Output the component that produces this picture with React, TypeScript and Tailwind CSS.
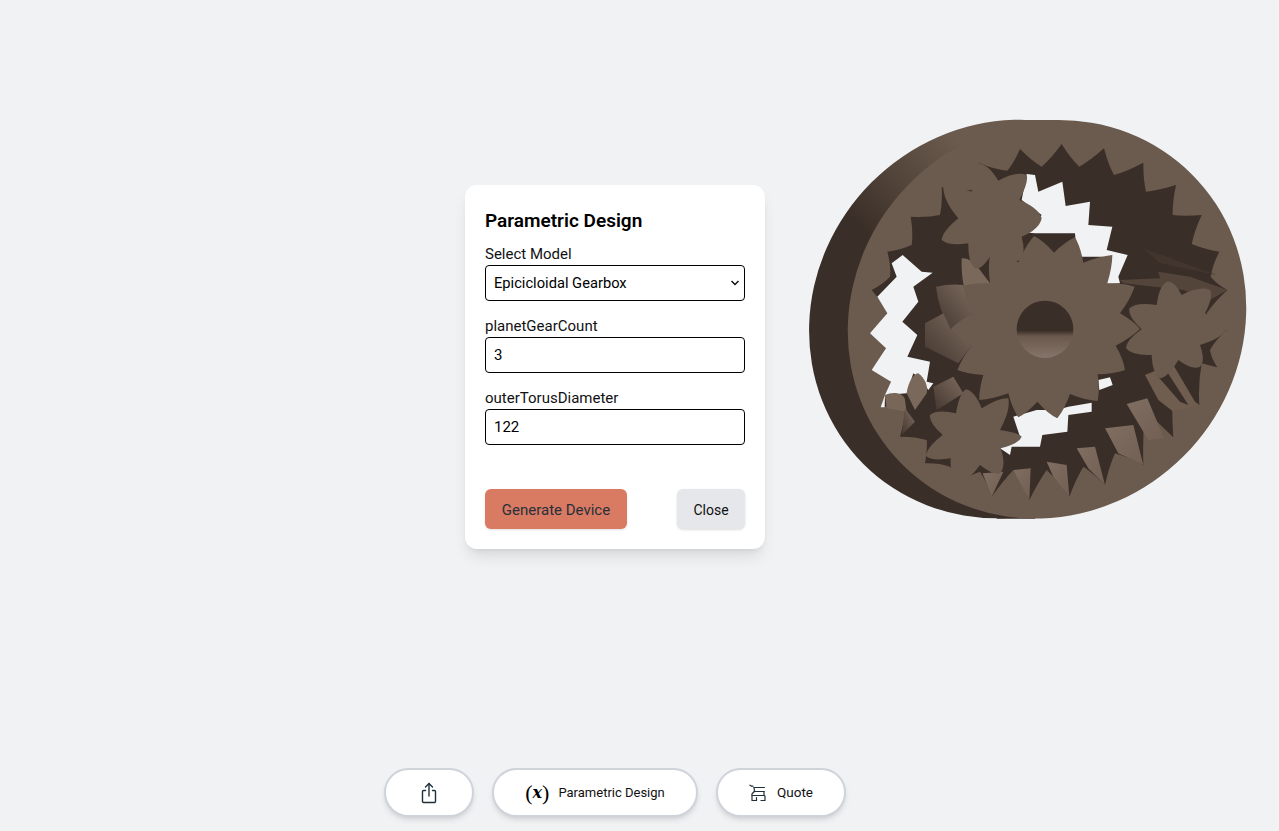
type Pt = [number, number];

// tips and valleys alternate; flanks bow outwards from the centre of the gear
function toothed(points: Pt[], cx: number, cy: number, bow: number) {
  let d = `M${points[0][0]} ${points[0][1]} `;
  points.forEach((p, i) => {
    const q = points[(i + 1) % points.length];
    const mx = (p[0] + q[0]) / 2;
    const my = (p[1] + q[1]) / 2;
    const len = Math.hypot(mx - cx, my - cy) || 1;
    d += `Q${(mx + ((mx - cx) / len) * bow).toFixed(1)} ${(my + ((my - cy) / len) * bow).toFixed(1)} ${q[0]} ${q[1]} `;
  });
  return d + "Z";
}

const sunPts: Pt[] = [
  [312, 18], [372, 68], [435, 22], [460, 98], [547, 75], [532, 160], [614, 170], [570, 250],
  [630, 297], [557, 347], [585, 420], [503, 433], [503, 513], [420, 492], [382, 565], [322, 515],
  [265, 562], [235, 490], [148, 510], [160, 435], [82, 420], [125, 347], [62, 297], [130, 250],
  [100, 168], [180, 160], [180, 75], [265, 97],
];
const planetA: Pt[] = [
  [148, 42], [205, 92], [290, 75], [268, 150], [335, 205], [275, 260], [270, 330], [180, 320],
  [135, 355], [115, 280], [35, 270], [85, 205], [40, 112], [125, 125],
];
const planetB: Pt[] = [
  [170, 65], [215, 105], [300, 90], [285, 160], [350, 208], [270, 255], [270, 320], [205, 300],
  [150, 355], [125, 285], [48, 265], [95, 208], [58, 145], [140, 135],
];
const planetC: Pt[] = [
  [258, 28], [305, 85], [385, 55], [360, 150], [425, 170], [362, 205], [360, 280], [300, 255],
  [228, 310], [212, 235], [138, 228], [188, 165], [150, 105], [228, 100],
];
const ringPts: Pt[] = [
  [652, 212], [690, 147], [755, 200], [815, 132], [868, 200], [942, 145], [972, 225], [1060, 188],
  [1068, 275], [1158, 255], [1148, 345], [1235, 345], [1205, 432], [1288, 455], [1262, 530], [1312, 570],
  [1250, 640], [1310, 690], [1260, 750], [1282, 802], [1235, 790], [1228, 915], [1150, 835], [1150, 1012],
  [1065, 930], [1060, 1095], [975, 1060], [945, 1155], [880, 1100], [838, 1190], [770, 1110], [718, 1200],
  [670, 1110], [605, 1190], [570, 1115], [500, 1150], [480, 1100], [405, 1090], [410, 1020], [330, 1010],
  [345, 925], [275, 920], [303, 845], [245, 810], [288, 745], [240, 700], [292, 640], [245, 570],
  [300, 530], [292, 455], [365, 435], [362, 350], [450, 345], [455, 262], [545, 270], [568, 190],
];

const lightTeeth = [
  "M1010 912L1072 895L1122 1015L1075 1020Z",
  "M945 985L1030 975L1060 1095L985 1060Z",
  "M860 1045L915 1040L945 1155L895 1105Z",
  "M770 1085L830 1095L838 1190L790 1130Z",
  "M670 1110L722 1105L718 1200Z",
  "M578 1120L640 1115L605 1190Z",
];

function GearModel() {
  return (
    <svg viewBox="0 0 1440 1320" className="absolute left-[790px] top-[100px] h-[440px] w-[480px]">
      <defs>
        <linearGradient id="rim" gradientUnits="userSpaceOnUse" x1="200" y1="370" x2="480" y2="100">
          <stop offset="0" stopColor="#3a2e28" />
          <stop offset="0.5" stopColor="#54463b" />
          <stop offset="1" stopColor="#6b5a4e" />
        </linearGradient>
        <linearGradient id="rimBack" href="#rim" gradientTransform="rotate(45 655 657)" />
        <linearGradient id="bore" x1="0" y1="0" x2="0" y2="1">
          <stop offset="0.52" stopColor="#3a2e28" />
          <stop offset="0.62" stopColor="#6a584c" />
          <stop offset="1" stopColor="#86756a" />
        </linearGradient>
        <linearGradient id="tooth" x1="0" y1="0" x2="1" y2="1">
          <stop offset="0" stopColor="#7f6e61" />
          <stop offset="1" stopColor="#735f54" />
        </linearGradient>
        <linearGradient id="side" x1="1" y1="0" x2="0" y2="1">
          <stop offset="0" stopColor="#7d6b5e" />
          <stop offset="1" stopColor="#443730" />
        </linearGradient>
      </defs>

      {/* body: back edge, joined to the front face */}
      <ellipse cx="655" cy="657" rx="615" ry="580" transform="rotate(-45 655 657)" fill="url(#rimBack)" />
      <path d="M690 60L806 60L736 1256L620 1256Z" fill="url(#rim)" />
      <ellipse cx="771" cy="658" rx="615" ry="580" transform="rotate(-45 771 658)" fill="#6b5a4e" />

      {/* inside of the ring */}
      <path d={toothed(ringPts, 771, 658, -8)} fill="#3a2e28" />
      {lightTeeth.map((d) => (
        <path key={d} d={d} fill="url(#tooth)" />
      ))}
      <path d="M1065 825L1150 790L1228 915L1150 935L1105 900Z" fill="#6f5d50" />
      <path d="M1100 825L1128 810L1195 915L1170 905Z" fill="#3a2e28" />
      <path d="M1150 795L1170 790L1228 915L1215 905Z" fill="#3a2e28" />
      <path d="M990 540L1110 535L1105 515L1200 530L1312 570L1260 600L1180 570L1000 550Z" fill="#54453b" />
      <path d="M1060 445L1280 525L1205 510L1110 490Z" fill="#41352d" />

      {/* see-through gaps */}
      <g fill="#f0f2f4">
        <path d="M710 222L735 225L745 275L817 245L827 318L900 305L895 375L967 380L950 450L1013 465L985 530L990 550L940 552L940 470L860 470L855 400L735 400L680 395L720 385L755 345L695 300Z" />
        <path d="M338 465L395 515L428 518L370 560L385 605L337 665L382 705L352 770L420 785L410 845L430 850L415 870L395 840L370 820L350 880L285 885L303 845L245 810L288 745L240 700L292 640L262 590L320 530L305 490Z" />
        <path d="M905 908L905 935L835 945L832 995L757 1005L750 1040L665 1040L660 1065L630 1045L690 1010L670 950L740 930L800 930L835 920Z" />
        <path d="M925 840L960 832L968 855L928 870Z" />
        <path d="M272 922L285 885L284 922Z" />
      </g>

      {/* back faces of the gears */}
      <path d="M350 880C355 840 375 820 385 820C405 835 415 860 410 880L375 930Z" fill="#7a685b" />
      <path d="M285 885C310 872 345 880 345 900L350 935L290 925Z" fill="#786659" />
      <path d="M335 1005L345 925L375 965Z" fill="url(#side)" />
      <path d="M430 860L490 830L520 880L440 930Z" fill="url(#side)" />

      <g transform="translate(420 390)">
        <path d="M95 85Q120 80 150 120L180 160L130 250Q92 180 95 85Z" fill="#7a685b" />
        <path d="M18 170Q60 160 100 165L130 250L62 297Q25 240 18 170Z" fill="url(#side)" />
        <path d="M-15 280L40 250L62 297L125 347L85 400L-15 350Z" fill="url(#side)" />
        <path d="M190 55L265 97L180 160Z" fill="#75635a" />
      </g>

      {/* sun and planets */}
      <path d={toothed(sunPts, 345, 298, 10)} fill="#6b5a4e" transform="translate(420 390)" />
      <path d={toothed(planetA, 185, 200, 24)} fill="#6b5a4e" transform="translate(420 150)" />
      <path d={toothed(planetB, 190, 210, 24)} fill="#6b5a4e" transform="translate(960 480)" />
      <path d={toothed(planetC, 270, 170, 24)} fill="#6b5a4e" transform="translate(270 840)" />
      <ellipse cx="765" cy="688" rx="85" ry="86" fill="url(#bore)" />
    </svg>
  );
}

function ShareIcon() {
  return (
    <svg viewBox="0 0 24 24" fill="none" stroke="#1f2f38" strokeWidth="1.4" strokeLinecap="round" strokeLinejoin="round" className="h-6 w-6">
      <path d="M12 2.500V15" />
      <path d="M8.500 6L12 2.500L15.500 6" />
      <path d="M8.500 9.500H6.500A1 1 0 0 0 5.500 10.500V20.500A1 1 0 0 0 6.500 21.500H17.500A1 1 0 0 0 18.500 20.500V10.500A1 1 0 0 0 17.500 9.500H15.500" />
    </svg>
  );
}

function CartIcon() {
  return (
    <svg viewBox="0 0 18 18" fill="none" stroke="#1f2f38" strokeWidth="1.2" strokeLinecap="round" strokeLinejoin="round" className="h-[18px] w-[18px]">
      <path d="M1 1.200L2.500 2.200H4" />
      <path d="M5 3.500H15.500" />
      <path d="M5 7.500H15" />
      <path d="M5 3.500L5.500 7.500L3 9.800V11.500H15.500" />
      <path d="M15 7.500V11.500" />
      <path d="M3 11.500V16.500H7.500V13.500" />
      <path d="M12 16.500H16V12" />
    </svg>
  );
}

function Field({ label, value }: { label: string; value: string }) {
  return (
    <div className="mb-3 flex flex-col">
      <label className="h-[24px] pt-px text-[15px] leading-[24px] text-[#111]">{label}</label>
      <input
        readOnly
        value={value}
        className="h-[36px] w-full rounded-[4px] border border-black bg-white px-2 text-[15px] text-black outline-none"
      />
    </div>
  );
}

export default function App() {
  return (
    <div className="relative h-screen w-full overflow-hidden bg-[#f0f2f4] font-['Roboto',sans-serif]">
      <GearModel />

      {/* dialog */}
      <div className="absolute left-[465px] top-[185px] flex h-[364px] w-[300px] flex-col rounded-xl bg-white p-5 shadow-[0_10px_15px_-3px_rgba(0,0,0,0.1),0_4px_6px_-4px_rgba(0,0,0,0.1)]">
        <h2 className="mb-[6px] mt-[2px] text-[19px] font-semibold leading-[28px] text-black">Parametric Design</h2>
        <div className="mb-3 flex flex-col">
          <label className="h-[24px] pt-px text-[15px] leading-[24px] text-[#111]">Select Model</label>
          <div className="relative">
            <select className="h-[36px] w-full appearance-none rounded-[4px] border border-black bg-white px-2 text-[14.700px] text-black outline-none">
              <option>Epicicloidal Gearbox</option>
            </select>
            <svg viewBox="0 0 10 6" fill="none" stroke="#111" strokeWidth="1.500" className="pointer-events-none absolute right-[5px] top-[15px] h-[6px] w-[10px]">
              <path d="M1.500 1L5 4.500L8.500 1" />
            </svg>
          </div>
        </div>
        <Field label="planetGearCount" value="3" />
        <Field label="outerTorusDiameter" value="122" />
        <div className="mt-auto flex items-center justify-between">
          <button className="h-10 w-[142px] rounded-md bg-[#d97a62] pt-[3px] text-[15px] text-[#27303a] shadow-sm">Generate Device</button>
          <button className="h-10 w-[68px] rounded-md bg-[#e5e7eb] pt-[3px] text-[14px] text-[#111] shadow-sm">Close</button>
        </div>
      </div>

      {/* bottom toolbar */}
      <div className="absolute bottom-[14px] left-[384px] flex gap-[18px]">
        <button className="flex h-[49px] w-[90px] items-center justify-center rounded-full border-2 border-[#cfd3da] bg-white shadow-md">
          <ShareIcon />
        </button>
        <button className="flex h-[49px] w-[206px] items-center justify-center gap-[9px] rounded-full border-2 border-[#cfd3da] bg-white text-[13px] text-[#111] shadow-md">
          <span className="flex items-center font-['Liberation_Serif',serif] text-[22px] leading-none text-black">
            (<span className="font-['DejaVu_Serif',serif] text-[16px] font-bold italic">x</span>)
          </span>
          <span>Parametric Design</span>
        </button>
        <button className="flex h-[49px] w-[130px] items-center justify-center gap-[10px] rounded-full border-2 border-[#cfd3da] bg-white text-[13.500px] text-[#111] shadow-md">
          <CartIcon />
          <span>Quote</span>
        </button>
      </div>
    </div>
  );
}
